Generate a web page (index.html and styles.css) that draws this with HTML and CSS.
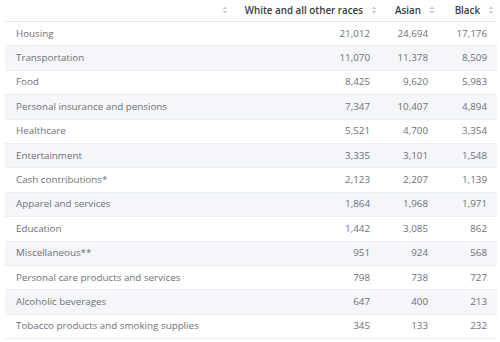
FILE: index.html
```html
<!DOCTYPE html>
<html>
<head>
<meta charset="utf-8">
<link rel="stylesheet" href="styles.css">
</head>
<body>
<table class="data">
  <colgroup>
    <col class="c1"><col class="c2"><col class="c3"><col class="c4">
  </colgroup>
  <thead>
    <tr>
      <th class="lab"><span class="sort"><svg width="6" height="8" viewBox="0 0 6 8"><path d="M3 0.5L5.5 3H0.5Z M3 7.5L5.5 5H0.5Z" fill="#c8ccd1"/></svg></span></th>
      <th class="num">White and all other races<span class="sort"><svg width="6" height="8" viewBox="0 0 6 8"><path d="M3 0.5L5.5 3H0.5Z M3 7.5L5.5 5H0.5Z" fill="#c8ccd1"/></svg></span></th>
      <th class="num">Asian<span class="sort"><svg width="6" height="8" viewBox="0 0 6 8"><path d="M3 0.5L5.5 3H0.5Z M3 7.5L5.5 5H0.5Z" fill="#c8ccd1"/></svg></span></th>
      <th class="num">Black<span class="sort"><svg width="6" height="8" viewBox="0 0 6 8"><path d="M3 0.5L5.5 3H0.5Z M3 7.5L5.5 5H0.5Z" fill="#c8ccd1"/></svg></span></th>
    </tr>
  </thead>
  <tbody>
    <tr><td>Housing</td><td>21,012</td><td>24,694</td><td>17,176</td></tr>
    <tr><td>Transportation</td><td>11,070</td><td>11,378</td><td>8,509</td></tr>
    <tr><td>Food</td><td>8,425</td><td>9,620</td><td>5,983</td></tr>
    <tr><td>Personal insurance and pensions</td><td>7,347</td><td>10,407</td><td>4,894</td></tr>
    <tr><td>Healthcare</td><td>5,521</td><td>4,700</td><td>3,354</td></tr>
    <tr><td>Entertainment</td><td>3,335</td><td>3,101</td><td>1,548</td></tr>
    <tr><td>Cash contributions*</td><td>2,123</td><td>2,207</td><td>1,139</td></tr>
    <tr><td>Apparel and services</td><td>1,864</td><td>1,968</td><td>1,971</td></tr>
    <tr><td>Education</td><td>1,442</td><td>3,085</td><td>862</td></tr>
    <tr><td>Miscellaneous**</td><td>951</td><td>924</td><td>568</td></tr>
    <tr><td>Personal care products and services</td><td>798</td><td>738</td><td>727</td></tr>
    <tr><td>Alcoholic beverages</td><td>647</td><td>400</td><td>213</td></tr>
    <tr><td>Tobacco products and smoking supplies</td><td>345</td><td>133</td><td>232</td></tr>
  </tbody>
</table>
</body>
</html>
```
FILE: styles.css
```css
html, body {
  margin: 0;
  padding: 0;
  background: #ffffff;
}
body {
  padding: 0 3px 0 5px;
  font-family: "Open Sans", "Liberation Sans", sans-serif;
  font-size: 9.8px;
  color: #6d7177;
}
.data {
  width: 492px;
  border-collapse: collapse;
  table-layout: fixed;
}
.c1 { width: 226px; }
.c2 { width: 149px; }
.c3 { width: 58px; }
.c4 { width: 59px; }
thead th {
  height: 21px;
  padding: 0 3px 0 0;
  font-weight: 600;
  color: #383b40;
  text-align: right;
  border-bottom: 1px solid #e4e7eb;
  white-space: nowrap;
  vertical-align: middle;
  line-height: 16px;
}
.sort {
  display: inline-block;
  width: 6px;
  margin-left: 8px;
  vertical-align: middle;
  line-height: 0;
  position: relative;
  top: -1px;
}
tbody td {
  height: 23.4px;
  padding: 0 10px 0 0;
  text-align: right;
  border-bottom: 1px solid #eceff2;
  white-space: nowrap;
  vertical-align: middle;
  line-height: 16px;
}
tbody td:first-child {
  text-align: left;
  padding-left: 11px;
}
tbody tr:nth-child(even) td {
  background: #f4f6f9;
}
```
